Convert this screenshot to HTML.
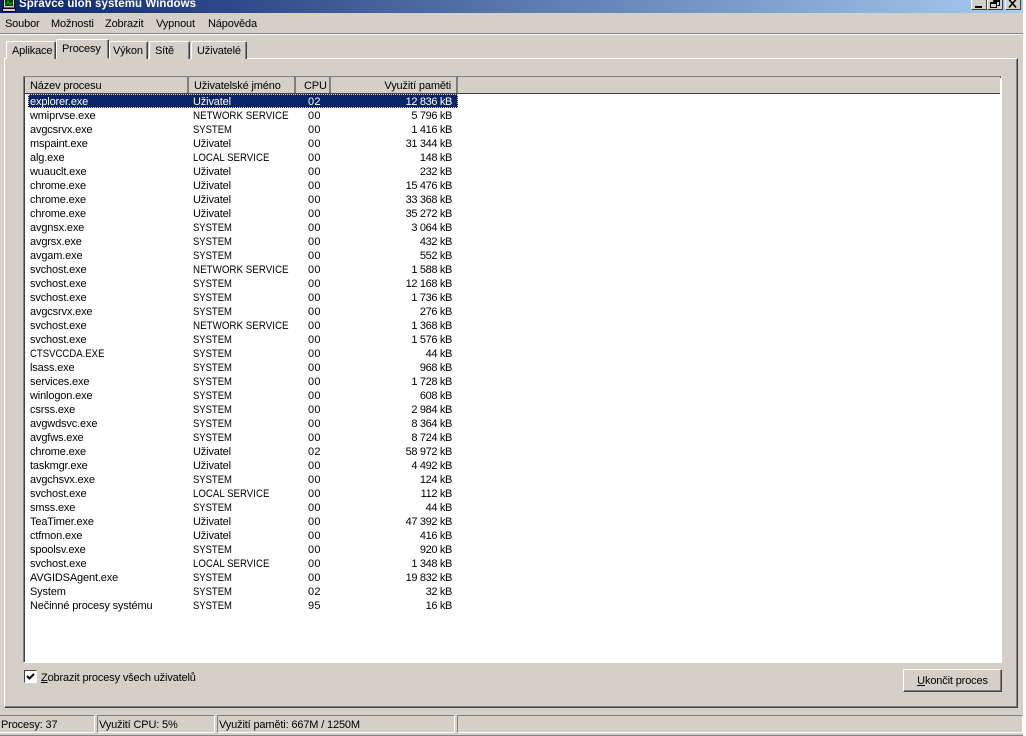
<!DOCTYPE html>
<html><head><meta charset="utf-8"><style>
html,body{margin:0;padding:0;background:#fff}
#w{position:relative;width:1023px;height:736px;overflow:hidden;background:#D4D0C8;font:11px/13px "Liberation Sans",sans-serif;letter-spacing:-.15px;color:#000}
#w div{position:absolute;white-space:nowrap;box-sizing:border-box}
.w{width:16px;height:14px;top:-4px;background:#D4D0C8;border:1px solid;border-color:#fff #404040 #404040 #fff}
.w svg{position:absolute;left:0;top:0}
.tab{top:41px;height:18px;background:#D4D0C8;border-top:1px solid #fff;border-left:1px solid #fff;border-right:1px solid #404040;box-shadow:inset -1px 0 0 #808080;border-top-left-radius:2px;border-top-right-radius:2px;padding:3px 0 0 5px}
.h{top:77px;height:16px;background:#D4D0C8;border-right:2px solid #808080;box-shadow:inset -1px 0 0 #D4D0C8;padding-top:3px}
.r{left:0;width:460px;height:14px;margin-top:1px}
.a{left:30px;top:0}.b{left:193px;top:0}.c{left:308px;top:0;letter-spacing:.2px}.d{left:332px;top:0;width:120px;text-align:right;letter-spacing:-.35px}
.n,.l,.s,.x{display:inline-block;transform-origin:0 50%;letter-spacing:0}
.n{transform:scaleX(.89)}.l{transform:scaleX(.88)}.s{transform:scaleX(.86)}.x{transform:scaleX(.87)}
.sel div{color:#fff}
.sp{top:715px;height:18px;border:1px solid;border-color:#808080 #fff #fff #808080;padding:3px 0 0 1px}
u{text-underline-offset:1px}
</style></head><body><div id="w">
<div style="left:0;top:0;width:1023px;height:13px;background:linear-gradient(90deg,#0A246A,#A6CAF0);overflow:hidden">
<div style="left:19px;top:-3px;color:#fff;font:bold 11.5px/14px 'Liberation Sans',sans-serif;letter-spacing:.05px">Správce úloh systému Windows</div></div>
<svg style="position:absolute;left:1px;top:0" width="16" height="13" viewBox="0 0 16 13"><rect x="2.500" y="-2" width="11" height="10" fill="#D4D0C8" stroke="#000"/><rect x="4" y="0" width="8" height="6" fill="#004000"/><path d="M4 4h2l1-3 2 4 1-2h2" fill="none" stroke="#0c0" stroke-width=".8"/><rect x="1.500" y="8.500" width="13" height="3" fill="#D4D0C8" stroke="#000"/></svg>
<div class="w" style="left:971px"><svg width="14" height="12"><path d="M3 9h7v2H3z"/></svg></div>
<div class="w" style="left:987px"><svg width="14" height="12"><path d="M5.500 3.500h6v5h-2M5.500 3.500v2M5 4.500h6M2.500 5.500h6v5h-6zM2 6.500h6" fill="none" stroke="#000"/></svg></div>
<div class="w" style="left:1005px"><svg width="14" height="12"><path d="M3 2.500l7 8M10 2.500l-7 8" stroke="#000" stroke-width="1.600"/></svg></div>

<div style="left:5px;top:18px">Soubor</div><div style="left:51px;top:18px">Možnosti</div><div style="left:105px;top:18px">Zobrazit</div><div style="left:156px;top:18px">Vypnout</div><div style="left:208px;top:18px">Nápověda</div>
<div style="left:0;top:33px;width:1023px;height:2px;border-top:1px solid #808080;border-bottom:1px solid #fff"></div>

<div style="left:4px;top:58px;width:1014px;height:650px;border:1px solid;border-color:#fff #404040 #404040 #fff;box-shadow:inset -1px -1px 0 #808080"></div>
<div class="tab" style="left:6px;width:50px">Aplikace</div>
<div class="tab" style="left:109px;width:39px;padding-left:3px">Výkon</div>
<div class="tab" style="left:149px;width:41px">Sítě</div>
<div class="tab" style="left:191px;width:56px">Uživatelé</div>
<div class="tab" style="left:56px;width:53px;top:39px;height:20px;padding:3px 0 0 5px;z-index:2;border-bottom:1px solid #D4D0C8">Procesy</div>

<div style="left:23px;top:76px;width:979px;height:587px;background:#fff;border:1px solid;border-color:#808080 #fff #fff #808080;box-shadow:inset 1px 1px 0 #404040"></div>
<div style="left:25px;top:77px;width:975px;height:16px;background:#D4D0C8"></div>
<div style="left:25px;top:93px;width:975px;height:1px;background:#404040"></div>
<div class="h" style="left:25px;width:164px;padding-left:5px">Název procesu</div>
<div class="h" style="left:189px;width:107px;padding-left:5px">Uživatelské jméno</div>
<div class="h" style="left:296px;width:35px;padding-left:8px">CPU</div>
<div class="h" style="left:331px;width:127px;text-align:right;padding-right:5px">Využití paměti</div>

<div style="left:28px;top:94px;width:430px;height:14px;background:#0A246A;outline:1px dotted #F5DE9A;outline-offset:-1px"></div>
<div class="r sel" style="top:95px"><div class="a">explorer.exe</div><div class="b">Uživatel</div><div class="c">02</div><div class="d">12 836 kB</div></div>
<div class="r" style="top:109px"><div class="a">wmiprvse.exe</div><div class="b"><span class="n">NETWORK SERVICE</span></div><div class="c">00</div><div class="d">5 796 kB</div></div>
<div class="r" style="top:123px"><div class="a">avgcsrvx.exe</div><div class="b"><span class="s">SYSTEM</span></div><div class="c">00</div><div class="d">1 416 kB</div></div>
<div class="r" style="top:137px"><div class="a">mspaint.exe</div><div class="b">Uživatel</div><div class="c">00</div><div class="d">31 344 kB</div></div>
<div class="r" style="top:151px"><div class="a">alg.exe</div><div class="b"><span class="l">LOCAL SERVICE</span></div><div class="c">00</div><div class="d">148 kB</div></div>
<div class="r" style="top:165px"><div class="a">wuauclt.exe</div><div class="b">Uživatel</div><div class="c">00</div><div class="d">232 kB</div></div>
<div class="r" style="top:179px"><div class="a">chrome.exe</div><div class="b">Uživatel</div><div class="c">00</div><div class="d">15 476 kB</div></div>
<div class="r" style="top:193px"><div class="a">chrome.exe</div><div class="b">Uživatel</div><div class="c">00</div><div class="d">33 368 kB</div></div>
<div class="r" style="top:207px"><div class="a">chrome.exe</div><div class="b">Uživatel</div><div class="c">00</div><div class="d">35 272 kB</div></div>
<div class="r" style="top:221px"><div class="a">avgnsx.exe</div><div class="b"><span class="s">SYSTEM</span></div><div class="c">00</div><div class="d">3 064 kB</div></div>
<div class="r" style="top:235px"><div class="a">avgrsx.exe</div><div class="b"><span class="s">SYSTEM</span></div><div class="c">00</div><div class="d">432 kB</div></div>
<div class="r" style="top:249px"><div class="a">avgam.exe</div><div class="b"><span class="s">SYSTEM</span></div><div class="c">00</div><div class="d">552 kB</div></div>
<div class="r" style="top:263px"><div class="a">svchost.exe</div><div class="b"><span class="n">NETWORK SERVICE</span></div><div class="c">00</div><div class="d">1 588 kB</div></div>
<div class="r" style="top:277px"><div class="a">svchost.exe</div><div class="b"><span class="s">SYSTEM</span></div><div class="c">00</div><div class="d">12 168 kB</div></div>
<div class="r" style="top:291px"><div class="a">svchost.exe</div><div class="b"><span class="s">SYSTEM</span></div><div class="c">00</div><div class="d">1 736 kB</div></div>
<div class="r" style="top:305px"><div class="a">avgcsrvx.exe</div><div class="b"><span class="s">SYSTEM</span></div><div class="c">00</div><div class="d">276 kB</div></div>
<div class="r" style="top:319px"><div class="a">svchost.exe</div><div class="b"><span class="n">NETWORK SERVICE</span></div><div class="c">00</div><div class="d">1 368 kB</div></div>
<div class="r" style="top:333px"><div class="a">svchost.exe</div><div class="b"><span class="s">SYSTEM</span></div><div class="c">00</div><div class="d">1 576 kB</div></div>
<div class="r" style="top:347px"><div class="a"><span class="x">CTSVCCDA.EXE</span></div><div class="b"><span class="s">SYSTEM</span></div><div class="c">00</div><div class="d">44 kB</div></div>
<div class="r" style="top:361px"><div class="a">lsass.exe</div><div class="b"><span class="s">SYSTEM</span></div><div class="c">00</div><div class="d">968 kB</div></div>
<div class="r" style="top:375px"><div class="a">services.exe</div><div class="b"><span class="s">SYSTEM</span></div><div class="c">00</div><div class="d">1 728 kB</div></div>
<div class="r" style="top:389px"><div class="a">winlogon.exe</div><div class="b"><span class="s">SYSTEM</span></div><div class="c">00</div><div class="d">608 kB</div></div>
<div class="r" style="top:403px"><div class="a">csrss.exe</div><div class="b"><span class="s">SYSTEM</span></div><div class="c">00</div><div class="d">2 984 kB</div></div>
<div class="r" style="top:417px"><div class="a">avgwdsvc.exe</div><div class="b"><span class="s">SYSTEM</span></div><div class="c">00</div><div class="d">8 364 kB</div></div>
<div class="r" style="top:431px"><div class="a">avgfws.exe</div><div class="b"><span class="s">SYSTEM</span></div><div class="c">00</div><div class="d">8 724 kB</div></div>
<div class="r" style="top:445px"><div class="a">chrome.exe</div><div class="b">Uživatel</div><div class="c">02</div><div class="d">58 972 kB</div></div>
<div class="r" style="top:459px"><div class="a">taskmgr.exe</div><div class="b">Uživatel</div><div class="c">00</div><div class="d">4 492 kB</div></div>
<div class="r" style="top:473px"><div class="a">avgchsvx.exe</div><div class="b"><span class="s">SYSTEM</span></div><div class="c">00</div><div class="d">124 kB</div></div>
<div class="r" style="top:487px"><div class="a">svchost.exe</div><div class="b"><span class="l">LOCAL SERVICE</span></div><div class="c">00</div><div class="d">112 kB</div></div>
<div class="r" style="top:501px"><div class="a">smss.exe</div><div class="b"><span class="s">SYSTEM</span></div><div class="c">00</div><div class="d">44 kB</div></div>
<div class="r" style="top:515px"><div class="a">TeaTimer.exe</div><div class="b">Uživatel</div><div class="c">00</div><div class="d">47 392 kB</div></div>
<div class="r" style="top:529px"><div class="a">ctfmon.exe</div><div class="b">Uživatel</div><div class="c">00</div><div class="d">416 kB</div></div>
<div class="r" style="top:543px"><div class="a">spoolsv.exe</div><div class="b"><span class="s">SYSTEM</span></div><div class="c">00</div><div class="d">920 kB</div></div>
<div class="r" style="top:557px"><div class="a">svchost.exe</div><div class="b"><span class="l">LOCAL SERVICE</span></div><div class="c">00</div><div class="d">1 348 kB</div></div>
<div class="r" style="top:571px"><div class="a">AVGIDSAgent.exe</div><div class="b"><span class="s">SYSTEM</span></div><div class="c">00</div><div class="d">19 832 kB</div></div>
<div class="r" style="top:585px"><div class="a">System</div><div class="b"><span class="s">SYSTEM</span></div><div class="c">02</div><div class="d">32 kB</div></div>
<div class="r" style="top:599px"><div class="a">Nečinné procesy systému</div><div class="b"><span class="s">SYSTEM</span></div><div class="c">95</div><div class="d">16 kB</div></div>

<div style="left:24px;top:670px;width:13px;height:13px;background:#fff;border:1px solid;border-color:#404040 #fff #fff #404040"><svg style="position:absolute;left:0;top:0" width="11" height="11"><path d="M2 5l2.500 2.500L9 3" fill="none" stroke="#000" stroke-width="2"/></svg></div>
<div style="left:41px;top:672px"><u>Z</u>obrazit procesy všech uživatelů</div>
<div style="left:903px;top:669px;width:99px;height:23px;border:1px solid;border-color:#fff #404040 #404040 #fff;box-shadow:inset -1px -1px 0 #808080;text-align:center;padding-top:5px"><u>U</u>končit proces</div>

<div class="sp" style="left:0;width:95px;border-left:0">Procesy: 37</div>
<div class="sp" style="left:97px;width:118px">Využití CPU: 5%</div>
<div class="sp" style="left:217px;width:238px">Využití paměti: 667M / 1250M</div>
<div class="sp" style="left:457px;width:566px"></div>
<div style="left:0;top:735px;width:1023px;height:1px;background:#808080"></div>
</div></body></html>
